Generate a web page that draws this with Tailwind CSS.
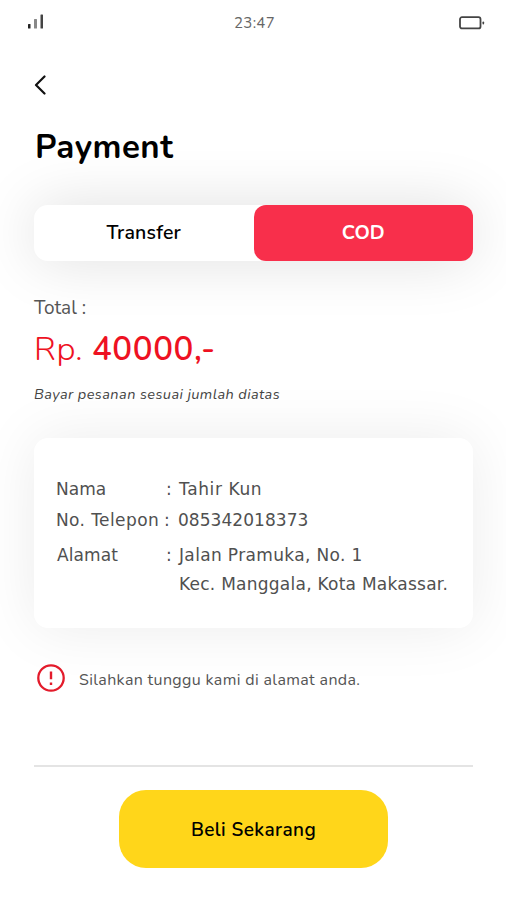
<!DOCTYPE html>
<html lang="id">
<head>
    <meta charset="UTF-8">
    <meta name="viewport" content="width=device-width, initial-scale=1.0">
    <title>Payment</title>
    <script src="https://cdn.jsdelivr.net/npm/@tailwindcss/browser@4"></script>
</head>
<body class="bg-white font-['Nunito','Noto_Sans',sans-serif] text-black">
    <div class="flex flex-col w-[506px] h-[900px] overflow-hidden pl-[34px] pr-[33px]">
        <!-- Status bar -->
        <div class="flex items-center justify-between h-11 -ml-[6px] -mr-[12px]">
            <svg class="w-[16px] h-[16px]" viewBox="0 0 16 16">
                <rect x="0" y="10" width="2.5" height="4.5" rx="0.5" fill="#222"/>
                <rect x="6" y="5" width="3" height="9.5" rx="0.5" fill="#888"/>
                <rect x="12.5" y="0.5" width="2.5" height="14" rx="0.5" fill="#444"/>
            </svg>
            <span class="text-[15px] leading-none text-[#666] tracking-[0.3px] mt-[3px] ml-[6px]">23:47</span>
            <svg class="w-[26px] h-[14px] mt-[2px]" viewBox="0 0 26 14">
                <rect x="1" y="1.2" width="20.5" height="11.2" rx="2" fill="none" stroke="#444" stroke-width="1.8"/>
                <rect x="23.5" y="5.5" width="1.6" height="3" rx="0.8" fill="#444"/>
            </svg>
        </div>

        <svg class="w-[12px] h-[20px] mt-[31px] shrink-0" viewBox="0 0 12 20" fill="none" stroke="#111" stroke-width="2.2" stroke-linecap="round" stroke-linejoin="round">
            <path d="M10.5 1.5L2 10l8.5 8.5"/>
        </svg>
        <h1 class="text-[33px] leading-[44px] font-bold tracking-[0.5px] mt-[31px] ml-px">Payment</h1>

        <!-- Payment method -->
        <div class="flex shrink-0 h-[56px] mt-[34.5px] bg-white rounded-[14px] shadow-[0_0_60px_rgba(0,0,0,0.13)] text-[19.5px] font-semibold">
            <button class="flex-1 tracking-[0.2px]">Transfer</button>
            <button class="flex-1 rounded-[12px] bg-[#f82f4b] text-white font-bold">COD</button>
        </div>

        <div class="text-[19px] leading-6 text-[#555] mt-[35.5px]">Total :</div>
        <div class="text-[33px] leading-[44px] text-[#ee1122] font-light tracking-[0.6px] mt-[8px]">Rp. <span class="font-semibold">40000,-</span></div>
        <p class="text-[14.5px] leading-5 italic text-[#444] tracking-[0.42px] mt-[12px]">Bayar pesanan sesuai jumlah diatas</p>

        <!-- Delivery details -->
        <div class="shrink-0 h-[190px] mt-[34px] pt-[36px] pl-[22px] bg-white rounded-[14px] shadow-[0_0_60px_rgba(0,0,0,0.08)] font-['DejaVu_Sans',sans-serif] text-[17px] leading-[30px] tracking-[0.25px] text-[#505050]">
            <div class="flex h-[31px]"><span class="w-[110px] tracking-normal">Nama</span><span class="w-[13px]">:</span><span class="tracking-[0.6px]">Tahir Kun</span></div>
            <div class="flex h-[35px]"><span class="w-[108px] tracking-[0.4px]">No. Telepon</span><span class="w-[14px]">:</span><span class="tracking-[0.05px]">085342018373</span></div>
            <div class="flex h-[29px]"><span class="w-[110px] pl-px tracking-[0.1px]">Alamat</span><span class="w-[13px]">:</span><span class="tracking-[0.35px]">Jalan Pramuka, No. 1</span></div>
            <div class="pl-[123px] whitespace-nowrap">Kec. Manggala, Kota Makassar.</div>
        </div>

        <div class="flex items-center mt-[36px] pl-[3px]">
            <svg class="w-[28px] h-[28px]" viewBox="0 0 28 28" fill="none" stroke="#e31b2b">
                <circle cx="14" cy="14" r="12.7" stroke-width="2.3"/>
                <path d="M14 7.5v7.8M14 18.5v2.6" stroke-width="2.4"/>
            </svg>
            <span class="ml-[14px] pt-[3px] text-[16px] leading-6 tracking-[0.35px] text-[#555]">Silahkan tunggu kami di alamat anda.</span>
        </div>

        <div class="shrink-0 mt-[73px] h-[2px] bg-[#e4e4e4]"></div>
        <button class="shrink-0 w-[269px] h-[78px] mt-[23px] ml-[85px] pt-[2px] rounded-[27px] bg-[#ffd61a] text-[19px] tracking-[0.4px] font-semibold">Beli Sekarang</button>
    </div>
</body>
</html>
